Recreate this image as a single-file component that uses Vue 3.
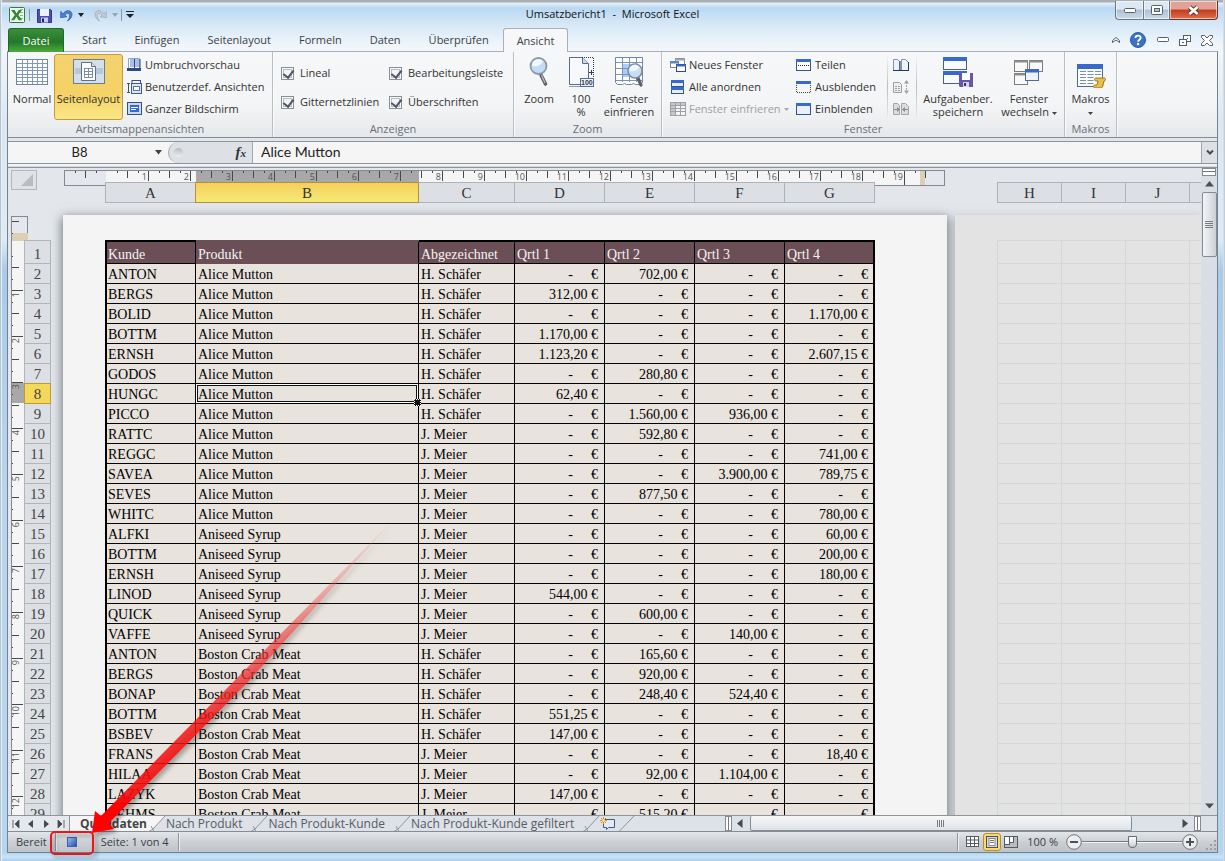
<script setup>
import { ref } from 'vue'

const tabs = ['Start', 'Einfügen', 'Seitenlayout', 'Formeln', 'Daten', 'Überprüfen', 'Ansicht']
const activeTab = ref('Ansicht')

const checks = ref([
  { id: 'lineal', label: 'Lineal', on: true },
  { id: 'bearb', label: 'Bearbeitungsleiste', on: true },
  { id: 'gitter', label: 'Gitternetzlinien', on: true },
  { id: 'ueber', label: 'Überschriften', on: true }
])

const columns = ['A', 'B', 'C', 'D', 'E', 'F', 'G']
const nextColumns = ['H', 'I', 'J', '']
const heads = ['Kunde', 'Produkt', 'Abgezeichnet', 'Qrtl 1', 'Qrtl 2', 'Qrtl 3', 'Qrtl 4']

const M = 'Alice Mutton'
const S = 'Aniseed Syrup'
const B = 'Boston Crab Meat'
const H = 'H. Schäfer'
const J = 'J. Meier'
const rows = [
  ['ANTON', M, H, '', '702,00', '', ''],
  ['BERGS', M, H, '312,00', '', '', ''],
  ['BOLID', M, H, '', '', '', '1.170,00'],
  ['BOTTM', M, H, '1.170,00', '', '', ''],
  ['ERNSH', M, H, '1.123,20', '', '', '2.607,15'],
  ['GODOS', M, H, '', '280,80', '', ''],
  ['HUNGC', M, H, '62,40', '', '', ''],
  ['PICCO', M, H, '', '1.560,00', '936,00', ''],
  ['RATTC', M, J, '', '592,80', '', ''],
  ['REGGC', M, J, '', '', '', '741,00'],
  ['SAVEA', M, J, '', '', '3.900,00', '789,75'],
  ['SEVES', M, J, '', '877,50', '', ''],
  ['WHITC', M, J, '', '', '', '780,00'],
  ['ALFKI', S, J, '', '', '', '60,00'],
  ['BOTTM', S, J, '', '', '', '200,00'],
  ['ERNSH', S, J, '', '', '', '180,00'],
  ['LINOD', S, J, '544,00', '', '', ''],
  ['QUICK', S, J, '', '600,00', '', ''],
  ['VAFFE', S, J, '', '', '140,00', ''],
  ['ANTON', B, H, '', '165,60', '', ''],
  ['BERGS', B, H, '', '920,00', '', ''],
  ['BONAP', B, H, '', '248,40', '524,40', ''],
  ['BOTTM', B, H, '551,25', '', '', ''],
  ['BSBEV', B, H, '147,00', '', '', ''],
  ['FRANS', B, J, '', '', '', '18,40'],
  ['HILAA', B, J, '', '92,00', '1.104,00', ''],
  ['LAZYK', B, J, '147,00', '', '', ''],
  ['LEHMS', B, J, '', '515,20', '', '']
]
const selectedRow = 8
const sheets = ['Nach Produkt', 'Nach Produkt-Kunde', 'Nach Produkt-Kunde gefiltert']

const hTicks = Array.from({ length: 82 }, (_, i) => i - 3).filter(i => i !== 0 && i < 79)
const vTicks = Array.from({ length: 52 }, (_, i) => i - 2)
const cellName = ref('B8')
const cellText = ref('Alice Mutton')
const zoom = ref(50)
</script>

<template>
  <div class="window">
    <header class="titlebar">
      <div class="qat">
        <svg class="xl" width="16" height="16" viewBox="0 0 16 16">
          <rect x=".5" y=".5" width="15" height="15" rx="1" fill="#f4faf2" stroke="#2f7d3a" />
          <path d="M11 2.500h3M11 5.500h3M11 8.500h3M11 11.500h3" stroke="#8dbb84" />
          <path d="M2 3h3.600l2 3.400L9.700 3H13L9.300 8l3.900 5.200H9.700L7.500 9.800 5.200 13.200H2L5.800 8z" fill="#2c8a34" />
        </svg>
        <i class="vsep"></i>
        <button aria-label="Speichern" class="save"><svg width="15" height="15" viewBox="0 0 15 15">
          <path d="M.5 1.500h13l1 1v12H.5z" fill="#4a4fb5" stroke="#33378c" />
          <rect x="3" y="1" width="9" height="7" fill="#eef1fb" /><rect x="4" y="9.500" width="7" height="5" fill="#c9cde6" />
          <rect x="5" y="10.500" width="2" height="3.500" fill="#23265f" />
        </svg></button>
        <button aria-label="Rückgängig" class="undo"><svg width="14" height="14" viewBox="0 0 14 14">
          <path d="M3 6C5.500 1.200 12 1.800 12 6.500c0 3-2 5-4.500 6.500 1.500-2 2.300-3.500 2.100-5.500C9.300 4.600 6.500 4.800 5 7.200l1.800 1.600L.6 9.600.8 3.400z" fill="#4a7fd6" stroke="#2f5cab" stroke-width=".8" />
        </svg></button>
        <svg class="dd" width="6" height="4"><path d="M0 0h6L3 4z" fill="#222" /></svg>
        <button aria-label="Wiederholen" class="redo"><svg width="14" height="14" viewBox="0 0 14 14">
          <path d="M11 6C8.500 1.200 2 1.800 2 6.500c0 3 2 5 4.500 6.500C5 11 4.200 9.500 4.400 7.500 4.700 4.600 7.500 4.800 9 7.200L7.200 8.800l6.200.8-.2-6.200z" fill="#c6cbd2" stroke="#a4abb4" stroke-width=".8" />
        </svg></button>
        <svg class="dd" width="6" height="4"><path d="M0 0h6L3 4z" fill="#9aa3ad" /></svg>
        <i class="vsep"></i>
        <svg class="dd menu" width="8" height="8"><path d="M0 .5h8" stroke="#222" /><path d="M0 3h8L4 7z" fill="#222" /></svg>
      </div>
      <h1 class="title">Umsatzbericht1&nbsp; -&nbsp; Microsoft Excel</h1>
      <div class="winbtns">
        <button aria-label="Minimieren" class="wb min"><svg width="14" height="8"><rect x="1.500" y="2.500" width="11" height="4" rx="1" fill="#fff" stroke="#59606b" /></svg></button>
        <button aria-label="Maximieren" class="wb max"><svg width="12" height="10"><rect x=".5" y=".5" width="11" height="9" rx="1" fill="#fff" stroke="#59606b" /><rect x="3.500" y="3.500" width="5" height="3" fill="#b4c2d2" stroke="#59606b" /></svg></button>
        <button aria-label="Schließen" class="wb close"><svg width="13" height="11" viewBox="0 0 13 11"><path d="M2.500 2 10.500 9M10.500 2 2.500 9" stroke="#5d3835" stroke-width="4.600" /><path d="M2.500 2 10.500 9M10.500 2 2.500 9" stroke="#fff" stroke-width="2.600" /></svg></button>
      </div>
    </header>

    <nav class="tabs">
      <button class="file">Datei</button>
      <button v-for="t in tabs" :key="t" class="tab" :class="{ active: t === activeTab }" @click="activeTab = t">{{ t }}</button>
      <div class="tabtools">
        <button aria-label="Menüband minimieren"><svg width="10" height="8"><path d="M1.500 6.500V4.500L5 1.500l3.500 3v2L5 4z" fill="#fff" stroke="#555d68" /></svg></button>
        <button aria-label="Hilfe"><svg width="18" height="18" viewBox="0 0 18 18">
          <circle cx="9" cy="9" r="7.500" fill="#3a72c8" stroke="#2c59a5" />
          <path d="M6.400 7C6.400 3.800 11.700 3.800 11.700 6.800 11.700 8.800 9.100 8.700 9.100 10.800" fill="none" stroke="#fff" stroke-width="1.800" /><circle cx="9.100" cy="13" r="1.200" fill="#fff" />
        </svg></button>
        <button aria-label="Fenster minimieren"><svg width="12" height="6"><rect x=".5" y=".5" width="11" height="4" rx="1" fill="#fff" stroke="#555d68" /></svg></button>
        <button aria-label="Fenster wiederherstellen"><svg width="12" height="11"><rect x="4.500" y=".5" width="7" height="6" fill="#fff" stroke="#555d68" /><rect x=".5" y="4.500" width="7" height="6" fill="#fff" stroke="#555d68" /><rect x="3" y="7" width="2" height="1" fill="#555d68" /><path d="M8 3.500h1" stroke="#555d68" /></svg></button>
        <button aria-label="Arbeitsmappe schließen"><svg width="12" height="11"><path d="M.5 .5h3L6 3 8.500.5h3v2L8.500 5.500l3 3v2h-3L6 8 3.500 10.500h-3v-2l3-3-3-3z" fill="#fff" stroke="#555d68" /></svg></button>
      </div>
    </nav>

    <main class="client">
      <section class="ribbon">
        <div class="group g1">
          <div class="items">
            <button class="big normal">
              <svg width="32" height="32"><rect x=".5" y="3.500" width="31" height="25" fill="#fff" stroke="#6e87ab" /><path d="M1 7.500h30M1 11.500h30M1 14.500h30M1 18.500h30M1 21.500h30M1 25.500h30M6.500 4v24M11.500 4v24M16.500 4v24M21.500 4v24M26.500 4v24" stroke="#8398b8" /></svg>
              <span>Normal</span>
            </button>
            <button class="big layout on">
              <svg width="32" height="32"><rect x=".5" y="3.500" width="31" height="24" fill="#d3dfea" stroke="#6b7d92" /><path d="M2 12h28v6H2z" fill="#b5c8d9" /><path d="M8.500 6.500h10l4 4v14h-14z" fill="#fff" stroke="#60718a" /><path d="M18.500 6.500v4h4" fill="#e3e9f0" stroke="#60718a" /><path d="M11 12.500h9M11 15.500h9M11 18.500h9M11 21.500h9M11.500 12v10M15.500 12v10M19.500 12v10" stroke="#7d8ea5" /></svg>
              <span>Seitenlayout</span>
            </button>
            <div class="stack">
              <button><svg width="15" height="14"><path d="M1.500.5h11v12h-11z" fill="#fff" stroke="#8ea3c6" /><path d="M3 1h4v8H3zM8 1h4v8H8z" fill="#a9c0e6" /><path d="M0 11.500h14" stroke="#2f4a80" stroke-width="3" /><path d="M7.500 1v11M13 1v12" stroke="#2f4a80" /></svg>Umbruchvorschau</button>
              <button><svg width="15" height="14"><rect x="4.500" y="3.500" width="10" height="10" fill="#dbe5f5" stroke="#43598a" /><rect x="6.500" y="6.500" width="6" height="4" fill="#fff" stroke="#5775ac" /><path d="M0 3.500h3M0 12.500h3M1.500 4v8M5 .5h9M5 0v3M13.500 0v3" stroke="#3c5079" /></svg>Benutzerdef. Ansichten</button>
              <button><svg width="15" height="14"><rect x=".5" y=".5" width="14" height="12" fill="#c8d8f5" stroke="#3c5079" /><rect x="3" y="3" width="9" height="7" fill="#3769cf" /><path d="M4 5.500h7M4 7.500h5" stroke="#fff" /></svg>Ganzer Bildschirm</button>
            </div>
          </div>
          <h2>Arbeitsmappenansichten</h2>
        </div>

        <div class="group g2">
          <div class="checks">
            <label v-for="c in checks" :key="c.id" :for="c.id"><input :id="c.id" v-model="c.on" type="checkbox" />{{ c.label }}</label>
          </div>
          <h2>Anzeigen</h2>
        </div>

        <div class="group g3">
          <div class="items">
            <button class="big zoomb">
              <svg width="32" height="32"><path d="M18 19 22.500 28" stroke="#5d6064" stroke-width="3.600" stroke-linecap="round" /><path d="M18.500 19 22 27" stroke="#b9bcc0" stroke-width="1.200" /><circle cx="15.500" cy="10" r="8" fill="#c3dbf4" stroke="#8b99a8" stroke-width="1.800" /><path d="M9 10a6.500 6.500 0 0 1 11-5C19 9 14 11 9 10z" fill="#f0f7fe" /></svg>
              <span>Zoom</span>
            </button>
            <button class="big hundred">
              <svg width="32" height="32"><path d="M4.500 1.500h13l6 6v21h-19z" fill="#f7f9fc" stroke="#566d92" /><path d="M17.500 1.500v6h6" fill="#cdd8e8" stroke="#566d92" /><path d="M17 1.500h11.500v20M4.500 30.500h13" fill="none" stroke="#303c55" stroke-dasharray="1 1" /><path d="M24 16.500h5M26.500 14v5" stroke="#303c55" /><rect x="15.500" y="22.500" width="13" height="8" fill="#eef3fa" stroke="#566d92" /><text x="16" y="29" class="mini">100</text></svg>
              <span>100<br />%</span>
            </button>
            <button class="big freeze">
              <svg width="32" height="32"><path d="M2.500 1.500h27v25l-2 2h-5l-2-1-2 1h-5l-2-1-2 1h-5l-2-2z" fill="#fff" stroke="#6e87ab" /><path d="M10 8h13v13H10z" fill="#aecbfa" /><path d="M3 6.500h26M3 12.500h26M3 18.500h26M3 24.500h26M9.500 2v24M16.500 2v24M23.500 2v24" stroke="#7d92b4" /><path d="M24.500 21 28 29" stroke="#5d6064" stroke-width="3.200" stroke-linecap="round" /><circle cx="22" cy="15" r="7" fill="#c7dff6" stroke="#7e8c9c" stroke-width="1.600" /><path d="M16.500 15a5.500 5.500 0 0 1 10-4c-1 3-5 5-10 4z" fill="#eff7fe" /></svg>
              <span>Fenster<br />einfrieren</span>
            </button>
          </div>
          <h2>Zoom</h2>
        </div>

        <div class="group g4">
          <div class="items">
            <div class="stack s1">
              <button><svg width="16" height="14"><rect x="5.500" y=".5" width="9" height="6" fill="#fff" stroke="#7e8794" /><path d="M5 1.500h10" stroke="#9aa3af" stroke-width="2" /><rect x=".5" y="3.500" width="8" height="6" fill="#fff" stroke="#7e8794" /><path d="M0 4.500h9" stroke="#5a86c9" stroke-width="2" /><rect x="6.500" y="6.500" width="9" height="7" fill="#fff" stroke="#2f4a80" /><path d="M6 7.500h10" stroke="#3769cf" stroke-width="2" /></svg>Neues Fenster</button>
              <button><svg width="16" height="14"><rect x="1.500" y=".5" width="12" height="6" fill="#e6eefb" stroke="#33558f" /><path d="M1 1.500h13" stroke="#3769cf" stroke-width="3" /><rect x="1.500" y="7.500" width="12" height="6" fill="#e6eefb" stroke="#33558f" /><path d="M1 8.500h13" stroke="#3769cf" stroke-width="3" /></svg>Alle anordnen</button>
              <button disabled><svg width="16" height="14"><rect x=".5" y=".5" width="15" height="13" fill="#f4f4f4" stroke="#a0a0a0" /><path d="M1 1h4v12H1zM1 1h14v3H1z" fill="#c8c8c8" /><path d="M1 3.500h14M1 6.500h14M1 9.500h14M5.500 1v12M10.500 1v12" stroke="#a0a0a0" /></svg>Fenster einfrieren<svg class="dd" width="5" height="3"><path d="M0 0h5L2.500 3z" fill="#a8a8a8" /></svg></button>
            </div>
            <div class="stack s2">
              <button><svg width="16" height="14"><rect x=".5" y="1.500" width="14" height="11" fill="#fff" stroke="#33558f" /><path d="M0 2.500h15" stroke="#3769cf" stroke-width="3" /><path d="M2 7.500h12" stroke="#222" stroke-dasharray="1 1" /></svg>Teilen</button>
              <button><svg width="16" height="14"><path d="M.5 3v10M14.500 3v10M1 12.500h14" fill="none" stroke="#444" stroke-dasharray="1 1" /><path d="M0 2.500h15" stroke="#3769cf" stroke-width="3" /></svg>Ausblenden</button>
              <button><svg width="16" height="14"><rect x=".5" y="1.500" width="14" height="11" fill="#e9f0fb" stroke="#33558f" /><path d="M0 2.500h15" stroke="#3769cf" stroke-width="3" /></svg>Einblenden</button>
            </div>
            <i class="gsep"></i>
            <div class="stack s3">
              <button aria-label="Nebeneinander anzeigen"><svg width="16" height="14"><path d="M.5 1.500h4l2 2v9h-6zM8.500 1.500h4l3 3v8h-7z" fill="#eef3fb" stroke="#7e92b5" /><path d="M0 12.500h16M7 3v10M15.500 4v9" stroke="#1f3864" /></svg></button>
              <button aria-label="Synchroner Bildlauf" disabled><svg width="16" height="14"><path d="M.5 2.500h6l2 2v8h-8z" fill="#eee" stroke="#a0a0a0" /><path d="M2 6.500h5M2 8.500h5M2 10.500h5M13.500 2v10" stroke="#a0a0a0" stroke-dasharray="2 1" /><path d="M11 3.500 13.500 0 16 3.500zM11 10.500 13.500 14 16 10.500z" fill="#a0a0a0" /></svg></button>
              <button aria-label="Fensterposition zurücksetzen" disabled><svg width="16" height="14"><path d="M.5 1.500h4l2 2v9h-6zM8.500 1.500h4l3 3v8h-7z" fill="#ddd" stroke="#a6a6a6" /><path d="M1 7.500h5M10 7.500h5" stroke="#8d8d8d" /><path d="M4 5v5l3-2.500zM12 5v5L9 7.500z" fill="#8d8d8d" /></svg></button>
            </div>
            <i class="gsep g"></i>
            <button class="big save-ws">
              <svg width="32" height="32"><rect x="1.500" y="1.500" width="23" height="12" fill="#f8fafd" stroke="#4e5f7d" /><path d="M1 3h24" stroke="#3769cf" stroke-width="4" /><rect x="1.500" y="15.500" width="23" height="12" fill="#f8fafd" stroke="#4e5f7d" /><path d="M1 17h24" stroke="#3769cf" stroke-width="4" /><path d="M17 17h14v14H18l-1-1z" fill="#6b55a8" /><path d="M20 17h8v7h-8z" fill="#fff" /><path d="M21 26h6v5h-6z" fill="#d7d2ea" /><path d="M22 27h2v3h-2z" fill="#3c2c72" /></svg>
              <span>Aufgabenber.<br />speichern</span>
            </button>
            <button class="big switch">
              <svg width="32" height="32"><g fill="#f9f9f9" stroke="#7c7c7c"><rect x="1.500" y="4.500" width="13" height="11" /><rect x="16.500" y="4.500" width="13" height="11" /><rect x="1.500" y="17.500" width="13" height="11" /></g><path d="M1 5.500h14M16 5.500h14M1 18.500h14" stroke="#8c8c8c" stroke-width="2" /><rect x="12.500" y="13.500" width="13" height="11" fill="#eef3fb" stroke="#4e6a99" /><path d="M12 15h14" stroke="#3769cf" stroke-width="3" /></svg>
              <span>Fenster<br />wechseln <svg class="dd" width="5" height="3"><path d="M0 0h5L2.500 3z" fill="#444" /></svg></span>
            </button>
          </div>
          <h2>Fenster</h2>
        </div>

        <div class="group g5">
          <div class="items">
            <button class="big makros">
              <svg width="32" height="32"><rect x="2.500" y="8.500" width="25" height="22" fill="#fff" stroke="#4e6a99" /><path d="M2 10.500h26" stroke="#3769cf" stroke-width="5" /><path d="M5 15.500h6M5 18.500h6M5 21.500h6M5 24.500h6M5 27.500h6M12.500 15.500h6M12.500 18.500h6M12.500 21.500h6M12.500 24.500h6M12.500 27.500h6M20 15.500h6M20 18.500h6" stroke="#6f8fc0" /><path d="M21 22h8c2 0 2 3 0 3l-1 4c0 2-1 3-3 3h-5c-2 0-2-3 0-3h2l1-4h-2c-2 0-2-3 0-3z" fill="#e9bd4c" stroke="#a2761c" /></svg>
              <span>Makros<br /><svg class="dd" width="5" height="3"><path d="M0 0h5L2.500 3z" fill="#444" /></svg></span>
            </button>
          </div>
          <h2>Makros</h2>
        </div>
      </section>

      <section class="formula">
        <input v-model="cellName" class="namebox" aria-label="Namenfeld" />
        <svg class="dd" width="7" height="5"><path d="M0 0h7L3.500 4.500z" fill="#3d4247" /></svg>
        <div class="pill"><i></i><span class="fx">f<small>x</small></span></div>
        <input v-model="cellText" class="fbox" aria-label="Bearbeitungsleiste" />
        <button class="expand" aria-label="Bearbeitungsleiste erweitern"><svg width="8" height="7"><path d="M1 1.500 4 4.500 7 1.500" fill="none" stroke="#444a50" stroke-width="2" /></svg></button>
      </section>

      <section class="work">
        <div class="sheet">
          <div class="top">
            <button class="corner" aria-label="Alles auswählen"><svg width="12" height="12"><path d="M12 0v12H0z" fill="#b9bdc2" /></svg></button>
            <div class="hband">
              <svg class="hruler" width="881" height="16">
                <rect x=".5" y=".5" width="880" height="15" fill="#e4e8ee" stroke="#84898f" />
                <rect x="42" y="1" width="815" height="14" fill="#f5f5f5" />
                <rect x="132" y="1" width="223" height="14" fill="#a8a8a8" />
                <rect x="856" y="1" width="5" height="14" fill="#dccfb4" />
                <g v-for="i in hTicks" :key="i">
                  <template v-if="i % 4 === 0">
                    <rect :x="Math.round(42 + i * 10.5)" y="1" width="1" :height="i > 75 ? 14 : 10" fill="#444a50" />
                    <text :x="Math.round(41 + i * 10.5)" y="10" text-anchor="end" class="rnum">{{ i / 4 }}</text>
                  </template>
                  <rect v-else :x="Math.round(42 + i * 10.5)" y="1" width="1" :height="i % 2 === 0 ? 7 : 2" fill="#444a50" />
                </g>
              </svg>
              <div class="colheads">
                <span v-for="c in columns" :key="c" :class="['c' + c, { sel: c === 'B' }]">{{ c }}</span>
              </div>
            </div>
            <div class="nextheads"><span v-for="c in nextColumns" :key="c">{{ c }}</span></div>
          </div>

          <div class="body">
            <svg class="vruler" width="17" height="640">
              <rect x=".5" y=".5" width="16" height="25" fill="#e4e8ee" stroke="#84898f" />
              <rect x="0" y="25" width="13" height="620" fill="#f5f5f5" />
              <path d="M.5 0v640" stroke="#84898f" />
              <rect x="1" y="17" width="16" height="8" fill="#dccfb4" />
              <rect x="1" y="167" width="12" height="20" fill="#a8a8a8" />
              <g v-for="i in vTicks" :key="i">
                <template v-if="i % 4 === 0 && i > 0">
                  <rect x="1" :y="Math.round(28 + i * 11.5)" width="11" height="1" fill="#444a50" />
                  <text :transform="`translate(8 ${Math.round(30 + i * 11.5)}) rotate(-90)`" text-anchor="end" class="rnum">{{ i / 4 }}</text>
                </template>
                <rect v-else-if="i !== 0" x="1" :y="Math.round(28 + i * 11.5)" :width="i % 2 === 0 ? 7 : 1" height="1" fill="#444a50" />
              </g>
            </svg>
            <div class="rowheads">
              <span v-for="n in 29" :key="n" :class="{ first: n === 1, sel: n === selectedRow }">{{ n }}</span>
            </div>
            <div class="page">
              <table>
                <colgroup><col v-for="c in columns" :key="c" :class="'w' + c" /></colgroup>
                <thead>
                  <tr><th v-for="h in heads" :key="h" :class="{ pb: h === 'Produkt' }">{{ h }}</th></tr>
                </thead>
                <tbody>
                  <tr v-for="(r, ri) in rows" :key="ri">
                    <td v-for="(v, ci) in r" :key="ci" :class="{ num: ci > 2, cur: ri + 2 === selectedRow && ci === 1 }">
                      <template v-if="ci < 3">{{ v }}</template>
                      <template v-else-if="v">{{ v }} €</template>
                      <template v-else><span class="dash">-</span>€</template>
                    </td>
                  </tr>
                </tbody>
              </table>
            </div>
            <div class="page2"><div class="ghost"></div></div>
          </div>
        </div>
        <div class="vscroll">
          <i class="split"></i>
          <button aria-label="Nach oben"><svg width="9" height="6"><path d="M0 5.500h9L4.500 0z" fill="#4a4f55" /></svg></button>
          <div class="vthumb"><i></i><i></i><i></i><i></i></div>
          <button class="down" aria-label="Nach unten"><svg width="9" height="6"><path d="M0 .5h9L4.500 5.500z" fill="#4a4f55" /></svg></button>
        </div>
      </section>

      <section class="sheetbar">
        <div class="sheetnav">
          <button aria-label="Erstes Blatt"><svg width="8" height="8"><path d="M1 0v8M7 0v8L3 4z" fill="#444a50" stroke="#444a50" stroke-width=".8" /></svg></button>
          <button aria-label="Voriges Blatt"><svg width="8" height="8"><path d="M6 0v8L1 4z" fill="#444a50" /></svg></button>
          <button aria-label="Nächstes Blatt"><svg width="8" height="8"><path d="M2 0v8l5-4z" fill="#444a50" /></svg></button>
          <button aria-label="Letztes Blatt"><svg width="8" height="8"><path d="M7 0v8M1 0v8l4-4z" fill="#444a50" stroke="#444a50" stroke-width=".8" /></svg></button>
        </div>
        <button class="stab active">Quelldaten</button>
        <template v-for="(s, i) in sheets" :key="s">
          <svg class="slash" width="18" height="16"><path v-if="i === 0" d="M0 0h17L5 13.500 2 16H0z" fill="#f5f5f5" /><path d="M17 0 5 13 1 15.500M3 10 6 15.500" fill="none" stroke="#8d949c" /></svg>
          <button class="stab">{{ s }}</button>
        </template>
        <svg class="slash" width="18" height="16"><path d="M17 0 5 13 1 15.500M3 10 6 15.500" fill="none" stroke="#8d949c" /></svg>
        <button class="newsheet" aria-label="Tabellenblatt einfügen"><svg width="16" height="13"><path d="M3.500 2.500h11v8H8.500l-2 2v-2h-3z" fill="#e3e9f5" stroke="#4a5a88" /><path d="M3.500 0v7M0 3.500h7M1 1l5 5M6 1 1 6" stroke="#d98a1e" /><circle cx="3.500" cy="3.500" r="1.300" fill="#fff3b0" /></svg></button>
        <svg class="slash" width="18" height="16"><path d="M17 0 2 15.500" fill="none" stroke="#8d949c" /></svg>
        <div class="hscroll">
          <i class="hsplit"></i>
          <button aria-label="Nach links"><svg width="6" height="9"><path d="M5.500 0v9L0 4.500z" fill="#444a50" /></svg></button>
          <div class="htrack"><div class="hthumb"><i></i><i></i><i></i><i></i></div></div>
          <button aria-label="Nach rechts"><svg width="6" height="9"><path d="M.5 0v9L6 4.500z" fill="#444a50" /></svg></button>
          <i class="hsplit last"></i>
        </div>
      </section>

      <footer class="status">
        <span class="ready">Bereit</span>
        <i class="ssep"></i>
        <button class="macro" aria-label="Makro aufzeichnen"><svg width="10" height="10"><defs><linearGradient id="mg" x1="0" y1="0" x2="1" y2="1"><stop offset="0" stop-color="#a9c6f7" /><stop offset="1" stop-color="#1e49a8" /></linearGradient></defs><rect x=".5" y=".5" width="9" height="9" fill="url(#mg)" stroke="#3a5fae" /></svg></button>
        <span class="pages">Seite: 1 von 4</span>
        <i class="ssep"></i>
        <div class="views">
          <i class="ssep"></i>
          <button aria-label="Normal"><svg width="14" height="12"><rect x=".5" y=".5" width="12" height="10" fill="#fff" stroke="#555b62" /><path d="M1 4h12M1 7.500h12M4.500 1v10M8.500 1v10" stroke="#555b62" /></svg></button>
          <button class="on" aria-label="Seitenlayout"><svg width="12" height="12"><rect x=".5" y=".5" width="11" height="11" fill="#d8d8d8" stroke="#4d5258" /><rect x="3" y="2.500" width="6" height="7" fill="#fff" stroke="#6b7077" stroke-width=".8" /><path d="M4 4.500h4M4 6.500h4" stroke="#777" /></svg></button>
          <button aria-label="Umbruchvorschau"><svg width="14" height="12"><rect x=".5" y=".5" width="13" height="11" fill="#b9bdc2" stroke="#555b62" /><path d="M1 1h4v7H1zM6 1h4v5H6z" fill="#fff" /><path d="M5.500 1v7M9.500 1v5.500H6M1 8.500h5" fill="none" stroke="#555b62" /></svg></button>
          <span class="pct">100 %</span>
          <button class="round" aria-label="Verkleinern"><svg width="16" height="16"><circle cx="8" cy="8" r="7.300" fill="#eceef0" stroke="#6f757c" /><path d="M4 8h8" stroke="#4b5056" stroke-width="2" /></svg></button>
          <input v-model="zoom" class="slider" type="range" min="0" max="100" aria-label="Zoom" />
          <button class="round" aria-label="Vergrößern"><svg width="16" height="16"><circle cx="8" cy="8" r="7.300" fill="#eceef0" stroke="#6f757c" /><path d="M4 8h8M8 4v8" stroke="#4b5056" stroke-width="2" /></svg></button>
          <svg class="grip" width="12" height="12"><path d="M9 1h2v2H9zM9 5h2v2H9zM9 9h2v2H9zM5 5h2v2H5zM5 9h2v2H5zM1 9h2v2H1z" fill="#9aa0a7" /></svg>
        </div>
      </footer>
    </main>

    <svg class="callout" width="420" height="360" viewBox="0 0 420 360">
      <defs>
        <linearGradient id="fade" gradientUnits="userSpaceOnUse" x1="92" y1="333" x2="398" y2="15">
          <stop offset="0" stop-color="#f00" /><stop offset=".07" stop-color="#f00" /><stop offset=".12" stop-color="#f60808" stop-opacity=".9" /><stop offset=".35" stop-color="#f31212" stop-opacity=".8" />
          <stop offset=".65" stop-color="#ee3535" stop-opacity=".55" /><stop offset="1" stop-color="#e88" stop-opacity=".05" />
        </linearGradient>
        <filter id="sh" x="-10%" y="-10%" width="120%" height="120%"><feDropShadow dx="3" dy="3" stdDeviation="2" flood-color="#000" flood-opacity=".35" /></filter>
      </defs>
      <g filter="url(#sh)">
        <path d="M92 333 95 311 101 316 240 175 398 15 248 182 109 323 114 329z" fill="url(#fade)" />
        <rect x="51" y="332" width="42" height="22" rx="4" fill="none" stroke="#e8141c" stroke-width="2" />
      </g>
    </svg>
  </div>
</template>

<style>
html, body { margin: 0; height: 100%; overflow: hidden; }
</style>

<style scoped>
* { box-sizing: border-box; }
button { font: inherit; color: inherit; background: none; border: 0; padding: 0; margin: 0; }
svg { display: block; flex: none; }
h1, h2 { margin: 0; font-weight: 400; }
.window {
  position: relative; height: 100vh; display: flex; flex-direction: column; padding: 0 7px 8px;
  font: 11px/14px "Open Sans", "Noto Sans", sans-serif; color: #333; overflow: hidden;
  background:
    linear-gradient(90deg, #b8c3cd 1px, #e6eff7 1px, #e6eff7 2px, transparent 2px, transparent calc(100% - 2px), #e6eff7 calc(100% - 2px), #c3ccd4 calc(100% - 1px)),
    linear-gradient(#a9aeb3 2px, #e8f1fa 3px, #b9d8f2 8px, #d3e6f6 22px, #eef5fb 44px, #f3f6f9 52px, #dbe8f4 120px, #dcebf7 240px, #a9cbe8 270px, #b7d5ee 500px, #b4d5f0 calc(100% - 8px), #c9e4f8 calc(100% - 4px), #a5cfee);
}
.titlebar { height: 28px; flex: none; display: grid; grid-template-columns: 1fr auto 1fr; align-items: start; }
.qat { display: flex; align-items: center; height: 28px; padding: 2px 0 0 2px; }
.vsep { width: 1px; height: 12px; background: #8d97a3; }
.xl { margin-right: 4px; }
.save { margin-left: 7px; }
.undo { margin-left: 8px; }
.dd { margin: 0 4px; display: inline-block; vertical-align: middle; }
.redo { margin-left: 6px; margin-right: 1px; }
.undo + .dd, .redo + .dd { margin-left: 4px; margin-right: 3px; }
.menu { margin: 0 0 0 4px; }
.title { font-size: 11px; line-height: 16px; color: #111; padding-top: 6px; }
.winbtns { display: flex; justify-self: end; height: 19px; margin-top: 1px; }
.wb { display: flex; align-items: center; justify-content: center; border: 1px solid #6b7684; border-top: 0; background: linear-gradient(#dbe7f3 45%, #aebfd2 50%, #cddcea); box-shadow: inset 0 0 0 1px #ffffff90; }
.min { width: 28px; border-radius: 0 0 0 4px; border-right: 0; }
.max { width: 27px; }
.close { width: 48px; border-radius: 0 0 4px 0; border-left: 0; border-color: #6b2f2b; background: linear-gradient(#e2a196 45%, #c43a20 50%, #d9734d); }

.tabs { height: 24px; flex: none; display: flex; align-items: stretch; position: relative; z-index: 1; margin-bottom: -1px; color: #3b3f46; }
.file { width: 56px; margin-left: 1px; margin-right: 4px; color: #fff; border: 1px solid #1f6a27; border-bottom: 0; border-radius: 3px 3px 0 0; background: linear-gradient(#3b8f3b, #23782a 55%, #4cab3c); }
.tab { padding: 0 14px; }
.tab.active { padding: 0 13px; border: 1px solid #a9b0b8; border-bottom: 0; border-radius: 3px 3px 0 0; background: #f6f7f8; }
.tabtools { margin-left: auto; display: flex; align-items: center; gap: 8px; padding-right: 5px; }
.tabtools button:nth-child(n+3) { margin-left: 2px; }

.client { flex: 1; min-height: 0; display: flex; flex-direction: column; border: solid #77828e; border-width: 1px 1px 0; border-top-color: #a9b0b8; background: #e2e6ec; }
.ribbon { display: flex; flex: none; height: 86px; border-bottom: 1px solid #868c93; background: linear-gradient(#f6f7f8, #f4f5f6 60%, #e6e9ec); }
.group { display: flex; flex-direction: column; border-right: 1px solid #b9bec4; box-shadow: 1px 0 #fafbfc; flex: none; }
.group h2 { margin-top: auto; text-align: center; font-size: 11px; line-height: 16px; color: #6a7077; }
.g1 { width: 265px; } .g2 { width: 241px; } .g3 { width: 148px; } .g4 { width: 403px; } .g5 { width: 52px; }
.items { display: flex; align-items: flex-start; padding-top: 2px; }
.big { display: flex; flex-direction: column; align-items: center; line-height: 13px; padding-top: 2px; flex: none; }
.big svg { margin-bottom: 4px; }
.big .dd { margin: 0; }
.normal { width: 46px; padding-left: 2px; }
.layout { width: 69px; height: 66px; }
.big.on { border: 1px solid #c59a3c; border-radius: 3px; background: linear-gradient(#f3d270, #f4d265 60%, #fbe787); padding-top: 1px; }
.stack { display: flex; flex-direction: column; padding-left: 4px; }
.stack button { height: 22px; display: flex; align-items: center; gap: 3px; white-space: nowrap; }
.stack button:disabled { color: #a0a0a0; }
.stack .dd { margin: 0; }
.checks { display: grid; grid-template-columns: 108px auto; row-gap: 15px; padding: 14px 0 0 8px; }
.checks label { display: flex; align-items: center; gap: 6px; white-space: nowrap; }
.checks input { appearance: none; position: relative; margin: 0; width: 13px; height: 13px; border: 1px solid #8a8f95; background: #f4f4f4; box-shadow: inset 0 0 0 1px #f8f8f8, inset 0 0 0 2px #b9bdc2; }
.checks input:checked::after { content: ""; position: absolute; left: 3px; top: 0; width: 5px; height: 8px; border: solid #4d5668; border-width: 0 2px 2px 0; rotate: 38deg; }
.zoomb { width: 50px; } .hundred { width: 34px; } .freeze { width: 62px; }
.mini { font: bold 7px "Liberation Sans", sans-serif; fill: #303c55; }
.s1 { width: 130px; padding-left: 8px; } .s2 { width: 95px; } .s3 { width: 28px; padding-left: 5px; }
.gsep { width: 1px; height: 60px; background: linear-gradient(#f0f1f2, #b9bec4, #e6e8ea); margin-top: 3px; }
.save-ws { width: 82px; } .switch { width: 60px; }
.makros { width: 51px; }

.formula { flex: none; height: 23px; margin-top: 3px; display: flex; align-items: center; border: 1px solid #8e949b; border-width: 1px 0; background: #f5f5f5; box-shadow: 0 2px #f2f4f6, 0 3px #d5dae2, 0 4px #8e949b; position: relative; z-index: 2; }
input { border: 0; outline: 0; background: none; padding: 0; color: #222; }
.namebox { width: 143px; text-align: center; font: 13px/18px Lato, sans-serif; padding-bottom: 2px; }
.formula .dd { margin-right: 6px; }
.pill { width: 85px; height: 21px; display: flex; align-items: center; justify-content: space-between; padding: 0 6px 0 5px; background: #dde1e6; border: solid #a2a8ae; border-width: 0 1px 0 1px; border-radius: 11px 0 0 11px; }
.pill i { width: 9px; height: 9px; border-radius: 50%; background: linear-gradient(#b6bbc1, #eef0f2); }
.fx { font: italic bold 15px/20px "Liberation Serif", serif; color: #333; }
.fx small { font-size: 11px; }
.fbox { flex: 1; min-width: 0; padding: 0 0 2px 8px; font: 14px/18px Lato, sans-serif; }
.expand { width: 16px; height: 21px; display: flex; align-items: center; justify-content: center; background: #dde1e6; border-left: 1px solid #a2a8ae; }

.work { flex: 1; min-height: 0; margin-top: 4px; display: flex; }
.sheet { flex: 1; min-width: 0; overflow: hidden; display: flex; flex-direction: column; background: #e3e7ec; font-family: "Liberation Serif", serif; }
.top { flex: none; height: 47px; display: flex; align-items: flex-start; }
.corner { flex: none; width: 26px; height: 20px; margin: 2px 0 0 3px; border: 1px solid #b3b7bc; background: #dfe3e8; display: flex; align-items: center; justify-content: flex-end; padding-right: 3px; }
.hband { flex: none; width: 881px; margin: 2px 0 0 27px; }
.rnum { font: 9px "Open Sans", sans-serif; fill: #555; }
.colheads, .nextheads { display: flex; font-size: 15px; line-height: 19px; text-align: center; color: #333; }
.colheads { position: relative; margin: -4px 0 0 41px; width: 770px; }
.colheads span, .nextheads span { flex: none; height: 21px; padding-top: 1px; background: #dce0e5; border: 1px solid #aeb3b9; border-left-width: 0; }
.colheads span:first-child, .nextheads span:first-child { border-left-width: 1px; }
.colheads .sel { border-color: #b98f3e; box-shadow: -1px 0 #b98f3e; background: linear-gradient(#f5cf5c, #f4ea74); }
.cA { width: 91px; } .cB { width: 223px; } .cC { width: 96px; } .cD, .cE, .cF, .cG { width: 90px; }
.nextheads { margin: 14px 0 0 52px; }
.nextheads span { width: 64px; }
.nextheads span:first-child { width: 65px; }
.body { flex: 1; min-height: 0; display: flex; align-items: flex-start; }
.vruler { margin: 1px 0 0 3px; }
.rowheads { position: relative; z-index: 1; flex: none; width: 27px; margin: 25px 0 0 -4px; display: flex; flex-direction: column; font-size: 15px; line-height: 21px; text-align: center; color: #444; }
.rowheads span { height: 20px; border: 1px solid #b0b5ba; border-top: 0; background: #dce0e5; }
.rowheads .first { height: 24px; line-height: 27px; border-top: 1px solid #b0b5ba; }
.rowheads .sel { background: #f5d75a; border-color: #c09a3a; box-shadow: 0 -1px #c09a3a; }
.page { flex: none; width: 884px; height: 700px; margin-left: 12px; padding: 25px 0 0 42px; background: #f4f4f4; box-shadow: 0 3px 10px 1px #6f757b; }
table { width: 770px; table-layout: fixed; border-collapse: separate; border-spacing: 0; border: solid #000; border-width: 2px 2px 0; font-size: 14px; line-height: 17px; color: #000; background: #e8e3dd; }
.wA { width: 89px; } .wB { width: 223px; } .wC { width: 96px; } .wD, .wE, .wF { width: 90px; } .wG { width: 88px; }
th, td { height: 20px; padding: 2px 0 0 1px; border: solid #000; border-width: 0 1px 1px 0; white-space: nowrap; text-align: left; font-weight: 400; }
th { height: 22px; padding-top: 4px; background: #6b4f56; color: #f7f2f3; }
th.pb { border-bottom-color: #6b4f56; box-shadow: 0 -2px #6b4f56; }
th:not(:first-child), td:not(:first-child) { padding-left: 2px; }
th:last-child, td:last-child { border-right: 0; }
td.num { text-align: right; padding-right: 6px; }
td.num:last-child { padding-right: 5px; }
.dash { margin-right: 18px; }
td.cur { position: relative; }
td.cur::before { content: ""; position: absolute; inset: 0; border: 1px solid #fff; box-shadow: inset 0 0 0 1px #111; }
td.cur::after { content: ""; position: absolute; right: -3px; bottom: -3px; width: 5px; height: 5px; background: #111; border: 1px dotted #fff; }
.page2 { flex: 1; height: 700px; margin-left: 8px; padding: 25px 0 0 42px; background: #e3e3e3; box-shadow: 0 3px 10px #6f757b80; }
.ghost { height: 640px; background: repeating-linear-gradient(90deg, #d5d8d8 0 1px, transparent 1px 64px), linear-gradient(#d5d8d8 1px, transparent 1px), repeating-linear-gradient(transparent 0 3px, #d5d8d8 3px 4px, transparent 4px 20px) 0 20px no-repeat; }

.vscroll { flex: none; width: 16px; display: flex; flex-direction: column; align-items: center; background: #d9dde5; padding-bottom: 6px; }
.split { width: 14px; height: 8px; border: 1px solid #858b92; background: linear-gradient(#fff 2px, #777 2px 3px, #fff 3px); }
.vscroll button { height: 16px; display: flex; align-items: center; }
.vthumb { width: 15px; height: 65px; border: 1px solid #858b92; border-radius: 2px; background: linear-gradient(90deg, #f3f4f6, #dcdfe4 60%, #ccd0d6); display: flex; flex-direction: column; align-items: center; justify-content: center; gap: 1px; }
.vthumb i { width: 8px; height: 1px; background: #777d84; }
.vscroll .down { margin-top: auto; height: 6px; }

.sheetbar { flex: none; height: 16px; display: flex; align-items: stretch; background: #dde1e8; border-top: 1px solid #8e949b; font-size: 12px; line-height: 15px; color: #565c63; }
.sheetnav { width: 62px; display: flex; align-items: center; justify-content: space-around; border-right: 1px solid #8e949b; background: #e5e8ed; }
.stab { white-space: nowrap; padding: 0 3px 0 0; }
.stab.active { font-weight: 700; padding: 0 1px 0 10px; background: #f5f5f5; color: #444; }
.stab + .slash { margin-left: 5px; }
.stab.active + .slash { margin-left: 0; }
.newsheet { margin-right: 1px; }
.hscroll { margin-left: auto; width: 492px; padding-right: 16px; display: flex; align-items: center; }
.hsplit { flex: none; width: 7px; height: 15px; border: 1px solid #858b92; background: linear-gradient(90deg, #fff 2px, #777 2px 3px, #fff 3px); margin-right: 5px; }
.htrack { flex: 1; margin: 0 3px 0 7px; height: 15px; }
.hthumb { width: 89%; height: 15px; border: 1px solid #858b92; border-top: 0; border-radius: 2px; background: linear-gradient(#f6f7f9, #dfe3e9); display: flex; align-items: center; justify-content: center; gap: 1px; }
.hthumb i { width: 1px; height: 7px; background: #777d84; }
.hsplit.last { margin: 0 0 0 6px; }

.status { flex: none; height: 22px; display: flex; align-items: center; border-top: 1px solid #868c93; border-bottom: 1px solid #71808e; background: linear-gradient(#e3e6e9, #ccd0d4 50%, #bfc4c9); color: #3a3f45; }
.ready { padding: 0 8px; }
.ssep { width: 1px; height: 18px; background: #90969c; box-shadow: 1px 0 #eef0f2; }
.macro { margin: 0 24px 0 11px; }
.pages { margin-right: 9px; }
.views { margin-left: auto; display: flex; align-items: center; }
.views button { margin-left: 5px; }
.views .ssep + button { margin-left: 8px; }
.views .on { width: 18px; height: 18px; margin-left: 3px; display: flex; align-items: center; justify-content: center; border: 1px solid #b98f2a; border-radius: 3px; background: #f8d96a; }
.views .on + button { margin-left: 3px; }
.pct { margin: 0 8px 0 9px; }
.slider { appearance: none; width: 100px; height: 14px; margin: 0; background: linear-gradient(#0000 6px, #777d84 6px 7px, #f2f3f4 7px 8px, #0000 8px); }
.slider::-webkit-slider-thumb { appearance: none; width: 9px; height: 12px; background: linear-gradient(#fff, #c9cdd2); border: 1px solid #666c73; border-radius: 1px 1px 5px 5px; }
.views .round { margin-left: 0; }
.grip { align-self: flex-end; margin-left: 7px; }

.callout { position: absolute; left: 0; bottom: 1px; pointer-events: none; }
</style>
